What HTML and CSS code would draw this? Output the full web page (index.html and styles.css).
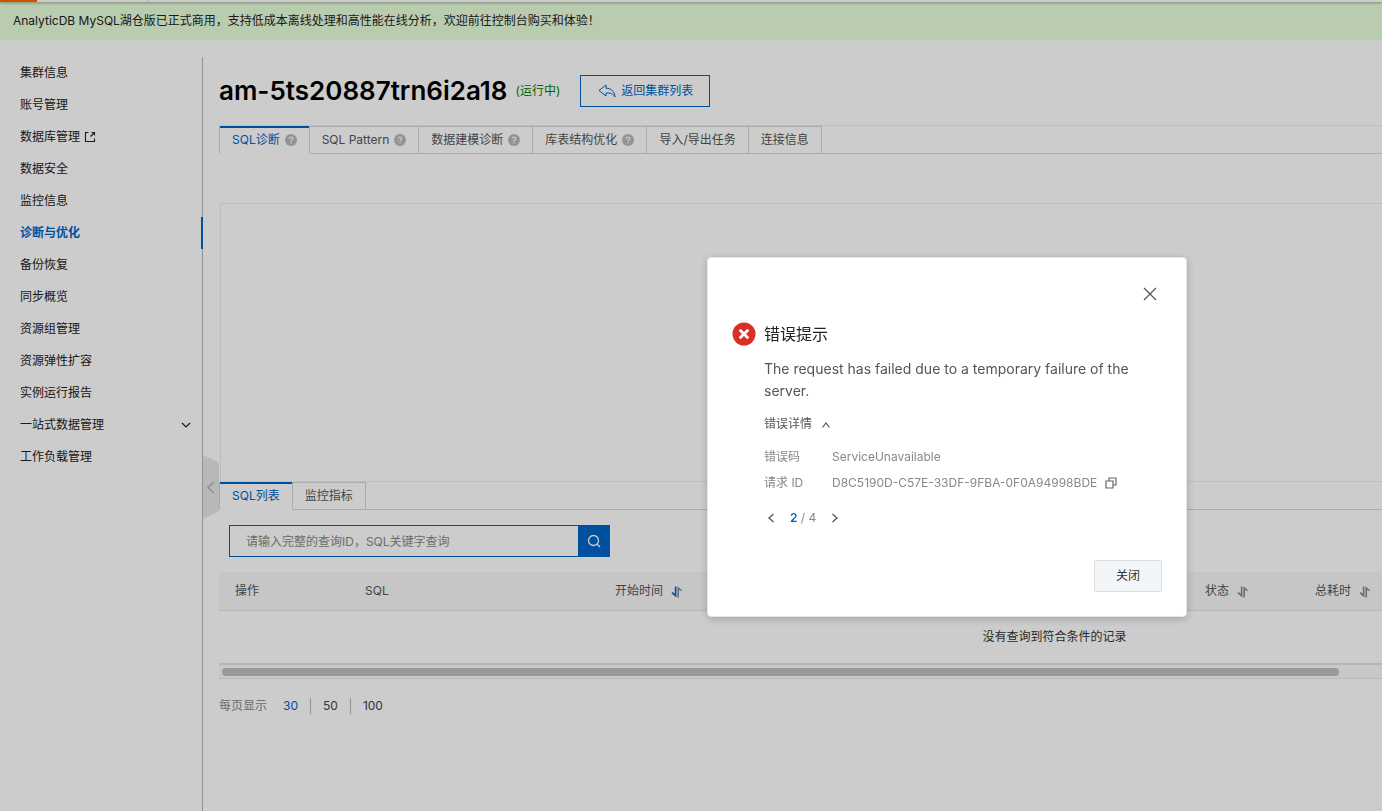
FILE: index.html
```html
<!DOCTYPE html>
<html lang="zh-CN">
<head>
<meta charset="utf-8">
<title>诊断与优化</title>
<link rel="stylesheet" href="styles.css">
</head>
<body>
<svg class="defs" aria-hidden="true">
  <symbol id="help" viewBox="0 0 12 12"><circle cx="6" cy="6" r="6" fill="#b8b8b8"/><path d="M4.2 4.8C4.2 2.4 7.8 2.5 7.8 4.6C7.8 5.9 6 5.8 6 7.2" fill="none" stroke="#fff" stroke-width="1.2"/><rect x="5.4" y="8.2" width="1.3" height="1.3" fill="#fff"/></symbol>
  <symbol id="sort" viewBox="0 0 12 12"><path class="down" d="M3.8 0.5h1.6v11L0.8 7.6V6.2h1.2l1.8 1.6z"/><path class="up" d="M6.4 11.5h1.6V4l2.6 1.2V3.8L6.4 0.3z"/></symbol>
</svg>

<div class="page">
  <div class="topbar"><span class="topbar-logo"></span><span class="topbar-item"></span></div>
  <div class="banner">AnalyticDB MySQL湖仓版已正式商用，支持低成本离线处理和高性能在线分析，欢迎前往控制台购买和体验！</div>
  <div class="body">
    <nav class="sidebar">
      <a class="nav" href="#">集群信息</a>
      <a class="nav" href="#">账号管理</a>
      <a class="nav" href="#">数据库管理<svg class="ext" viewBox="0 0 12 12"><path d="M4.500 1.500h-3v9h9v-3M7.500 1.500h3v3M10.500 1.500L6.500 5.500" fill="none" stroke="currentColor" stroke-width="1.100"/></svg></a>
      <a class="nav" href="#">数据安全</a>
      <a class="nav" href="#">监控信息</a>
      <a class="nav active" href="#">诊断与优化</a>
      <a class="nav" href="#">备份恢复</a>
      <a class="nav" href="#">同步概览</a>
      <a class="nav" href="#">资源组管理</a>
      <a class="nav" href="#">资源弹性扩容</a>
      <a class="nav" href="#">实例运行报告</a>
      <a class="nav" href="#">一站式数据管理<svg class="chev" viewBox="0 0 10 10"><path d="M1 3l4 4 4-4" fill="none" stroke="currentColor" stroke-width="1.2"/></svg></a>
      <a class="nav" href="#">工作负载管理</a>
      <button class="collapse" aria-label="收起"><svg viewBox="0 0 16 64"><path d="M0 0l16 8v48L0 64z" fill="#e6e6e6"/><path d="M11 27l-6 5.500 6 5.500" fill="none" stroke="#b0b0b0" stroke-width="1.300"/></svg></button>
    </nav>
    <main class="main">
      <header class="head">
        <h1 class="title">am-5ts20887trn6i2a18</h1>
        <span class="status">(运行中)</span>
        <button class="back"><svg viewBox="0 0 18 14"><path d="M8 1L1 6.500l7 5.500V9c4-.3 7 .5 9 4C16.500 7 13 4.300 8 4.200z" fill="none" stroke="currentColor" stroke-width="1"/></svg>返回集群列表</button>
      </header>
      <div class="tabs">
        <button class="tab on">SQL诊断<svg class="q"><use href="#help"/></svg></button>
        <button class="tab">SQL Pattern<svg class="q"><use href="#help"/></svg></button>
        <button class="tab">数据建模诊断<svg class="q"><use href="#help"/></svg></button>
        <button class="tab">库表结构优化<svg class="q"><use href="#help"/></svg></button>
        <button class="tab">导入/导出任务</button>
        <button class="tab">连接信息</button>
      </div>
      <section class="chart" aria-label="图表"></section>
      <div class="tabs">
        <button class="tab on">SQL列表</button>
        <button class="tab">监控指标</button>
      </div>
      <form class="search">
        <input class="search-input" type="text" aria-label="查询" placeholder="请输入完整的查询ID，SQL关键字查询">
        <button class="search-btn" type="button" aria-label="搜索"><svg viewBox="0 0 14 14"><path d="M10.200 10.200L13 13" stroke="#fff" stroke-width="1.400"/><circle cx="6.500" cy="6.500" r="5" fill="none" stroke="#fff" stroke-width="1.300"/></svg></button>
      </form>
      <div class="table-wrap">
        <table class="table">
          <colgroup><col class="c-op"><col class="c-sql"><col class="c-start"><col class="c-state"><col></colgroup>
          <thead><tr>
            <th>操作</th>
            <th>SQL</th>
            <th>开始时间<svg class="sort desc"><use href="#sort"/></svg></th>
            <th>状态<svg class="sort"><use href="#sort"/></svg></th>
            <th>总耗时<svg class="sort"><use href="#sort"/></svg></th>
          </tr></thead>
          <tbody><tr><td colspan="5">没有查询到符合条件的记录</td></tr></tbody>
        </table>
      </div>
      <div class="track"><div class="thumb"></div></div>
      <div class="pager">
        <span class="pager-label">每页显示</span>
        <a class="size on" href="#">30</a><a class="size" href="#">50</a><a class="size" href="#">100</a>
      </div>
    </main>
  </div>
</div>

<div class="overlay">
  <div class="dialog" role="dialog" aria-labelledby="dlg-title">
    <button class="close" aria-label="关闭对话框"><svg viewBox="0 0 14 14"><path d="M1 1l12 12M13 1L1 13" stroke="#555" stroke-width="1.200"/></svg></button>
    <div class="dlg-body">
      <svg class="err" viewBox="0 0 24 24"><circle cx="12" cy="12" r="11.500" fill="#d93026"/><path d="M7.700 7.700l8.600 8.600M16.300 7.700l-8.600 8.600" stroke="#fff" stroke-width="2.800"/></svg>
      <div class="dlg-text">
        <h2 class="dlg-title" id="dlg-title">错误提示</h2>
        <p class="msg">The request has failed due to a temporary failure of the server.</p>
        <button class="detail">错误详情<svg viewBox="0 0 10 10"><path d="M1.500 8.500L5 4l3.500 4.500" fill="none" stroke="#555" stroke-width="1.200"/></svg></button>
        <dl class="info">
          <dt>错误码</dt><dd>ServiceUnavailable</dd>
          <dt>请求 ID</dt><dd>D8C5190D-C57E-33DF-9FBA-0F0A94998BDE<svg class="copy" viewBox="0 0 12 12"><path d="M1 4h7v7H1zM4 4V1h7v7H8" fill="none" stroke="#666" stroke-width="1.200"/></svg></dd>
        </dl>
        <div class="steps">
          <button class="step" aria-label="上一条"><svg viewBox="0 0 10 10"><path d="M7.500 1L3 5l4.500 4" fill="none" stroke="#555" stroke-width="1.300"/></svg></button>
          <span class="count"><b>2</b> / 4</span>
          <button class="step" aria-label="下一条"><svg viewBox="0 0 10 10"><path d="M2.500 1L7 5l-4.500 4" fill="none" stroke="#555" stroke-width="1.300"/></svg></button>
        </div>
      </div>
    </div>
    <div class="dlg-foot"><button class="ok">关闭</button></div>
  </div>
</div>
</body>
</html>
```

FILE: styles.css
```css
* { box-sizing: border-box; }
body {
  margin: 0;
  background: #fff;
  color: #333;
  font: 12px/20px Inter, "Noto Sans CJK SC", sans-serif;
}
button, input {
  margin: 0;
  padding: 0;
  border: 0;
  background: none;
  color: inherit;
  font: inherit;
}
a { color: inherit; text-decoration: none; }
.defs { position: absolute; width: 0; height: 0; }

.page { display: flex; flex-direction: column; min-height: 100vh; overflow: hidden; }
.topbar {
  position: relative;
  display: flex;
  height: 2px;
  background: #fff;
  box-shadow: 0 1px 3px rgba(0, 0, 0, 0.4);
}
.topbar-logo { width: 37px; background: #ff6a00; }
.topbar-item { width: 112px; border-right: 1px solid #ddd; }
.banner { padding: 9px 13px; background: #e9ffdc; color: #222; }
.body { display: flex; flex: 1; }

.sidebar {
  position: relative;
  width: 203px;
  flex: none;
  margin-top: 17px;
  border-right: 1px solid #b8b8b8;
}
.nav {
  display: flex;
  align-items: center;
  height: 32px;
  padding: 0 11px 0 20px;
  color: #222;
}
.nav.active {
  margin-right: -1px;
  border-right: 2px solid #0064c8;
  color: #0064c8;
  font-weight: 600;
}
.ext { width: 12px; height: 12px; margin-left: 4px; }
.chev { width: 10px; height: 10px; margin-left: auto; }
.collapse { position: absolute; top: 398px; left: 100%; margin-left: 1px; width: 16px; height: 64px; }
.collapse svg { display: block; width: 16px; height: 64px; }

.main { flex: 1; min-width: 0; padding: 35px 0 0 16px; }
.head { display: flex; align-items: center; height: 32px; }
.title { margin: 0; color: #000; font-size: 26px; line-height: 32px; font-weight: 600; }
.status { margin: 0 20px 0 8px; color: #008000; }
.back {
  display: flex;
  align-items: center;
  gap: 5px;
  height: 32px;
  padding: 0 16px 0 17px;
  border: 1px solid #0064c8;
  color: #0064c8;
}
.back svg { width: 18px; height: 14px; }

.tabs { display: flex; height: 29px; border-top: 1px solid #eee; border-bottom: 1px solid #d8d8d8; }
.head + .tabs { margin-top: 18px; }
.tab {
  display: flex;
  align-items: center;
  height: 28px;
  padding: 0 12px;
  border: solid #d8d8d8;
  border-width: 1px 1px 1px 0;
  color: #555;
}
.tab.on {
  position: relative;
  border-left-width: 1px;
  border-bottom-color: #fff;
  color: #0064c8;
}
.tab.on::before {
  content: "";
  position: absolute;
  top: -1px;
  left: 0;
  right: 0;
  height: 2px;
  background: #0064c8;
}
.q { width: 12px; height: 12px; margin-left: 5px; }
.chart { height: 278px; margin: 49px 0 0 1px; border: solid #eee; border-width: 1px 0 0 1px; }

.search { display: flex; width: 381px; height: 32px; margin: 15px 0 15px 10px; }
.search-input { flex: 1; min-width: 0; padding: 1px 16px 0; border: 1px solid #0064c8; border-right: 0; }
.search-input::placeholder { color: #888; opacity: 1; }
.search-btn { display: grid; place-items: center; width: 32px; background: #0064c8; }
.search-btn svg { width: 14px; height: 14px; }

.table-wrap { overflow: hidden; border-bottom: 2px solid #e4e4e4; }
.table { width: 1671px; border-collapse: collapse; table-layout: fixed; }
.c-op { width: 130px; }
.c-sql { width: 250px; }
.c-start { width: 590px; }
.c-state { width: 110px; }
.table th {
  height: 38px;
  padding: 0 16px;
  border-bottom: 1px solid #e4e4e4;
  background: #f8f8f8;
  color: #555;
  font-weight: 400;
  text-align: left;
}
.table td { height: 53px; padding: 0; color: #333; text-align: center; }
.sort { width: 12px; height: 12px; margin-left: 8px; vertical-align: -3px; color: #888; fill: #888; }
.sort.desc { color: #0064c8; }
.down { fill: currentColor; }

.track { height: 14px; padding: 3px 43px 0 3px; border-bottom: 1px solid #e6e6e6; background: #fafafa; }
.thumb { height: 8px; border-radius: 4px; background: #c0c0c0; }
.pager { display: flex; align-items: center; margin-top: 17px; }
.pager-label { margin-right: 4px; color: #888; }
.size { padding: 0 12px; color: #444; line-height: 16px; }
.size + .size { border-left: 1px solid #b8b8b8; }
.size.on { color: #0064c8; }

.overlay {
  position: fixed;
  inset: 0;
  display: flex;
  align-items: flex-start;
  justify-content: flex-end;
  padding: 257px 195px 0 16px;
  background: rgba(0, 0, 0, 0.2);
}
.dialog {
  position: relative;
  width: 480px;
  padding: 64px 24px 24px;
  border: 1px solid #e6e6e6;
  border-radius: 4px;
  background: #fff;
  box-shadow: 0 2px 8px rgba(0, 0, 0, 0.2);
}
.close { position: absolute; top: 29px; right: 29px; width: 14px; height: 14px; }
.close svg { display: block; width: 14px; height: 14px; }
.dlg-body { display: flex; gap: 8px; }
.err { flex: none; width: 24px; height: 24px; }
.dlg-text { flex: 1; min-width: 0; }
.dlg-title { margin: 0; color: #222; font-size: 16px; line-height: 24px; font-weight: 400; }
.msg { margin: 12px 0; padding-right: 24px; color: #555; font-size: 14px; line-height: 22px; }
.detail { display: flex; align-items: center; gap: 9px; color: #555; }
.detail svg { width: 10px; height: 10px; }
.info { display: grid; grid-template-columns: 68px 1fr; gap: 6px 0; margin: 13px 0 15px; color: #888; }
.info dt, .info dd { display: flex; align-items: center; gap: 8px; margin: 0; }
.copy { width: 12px; height: 12px; }
.steps { display: flex; align-items: center; color: #888; }
.step { display: grid; place-items: center; width: 14px; height: 20px; }
.step svg { width: 10px; height: 10px; }
.count { margin: 0 12px; }
.count b { color: #0064c8; font-weight: 600; }
.dlg-foot { display: flex; justify-content: flex-end; margin-top: 32px; }
.ok { width: 68px; height: 32px; border: 1px solid #dedede; border-radius: 2px; background: #f2f5f7; color: #333; }
```
